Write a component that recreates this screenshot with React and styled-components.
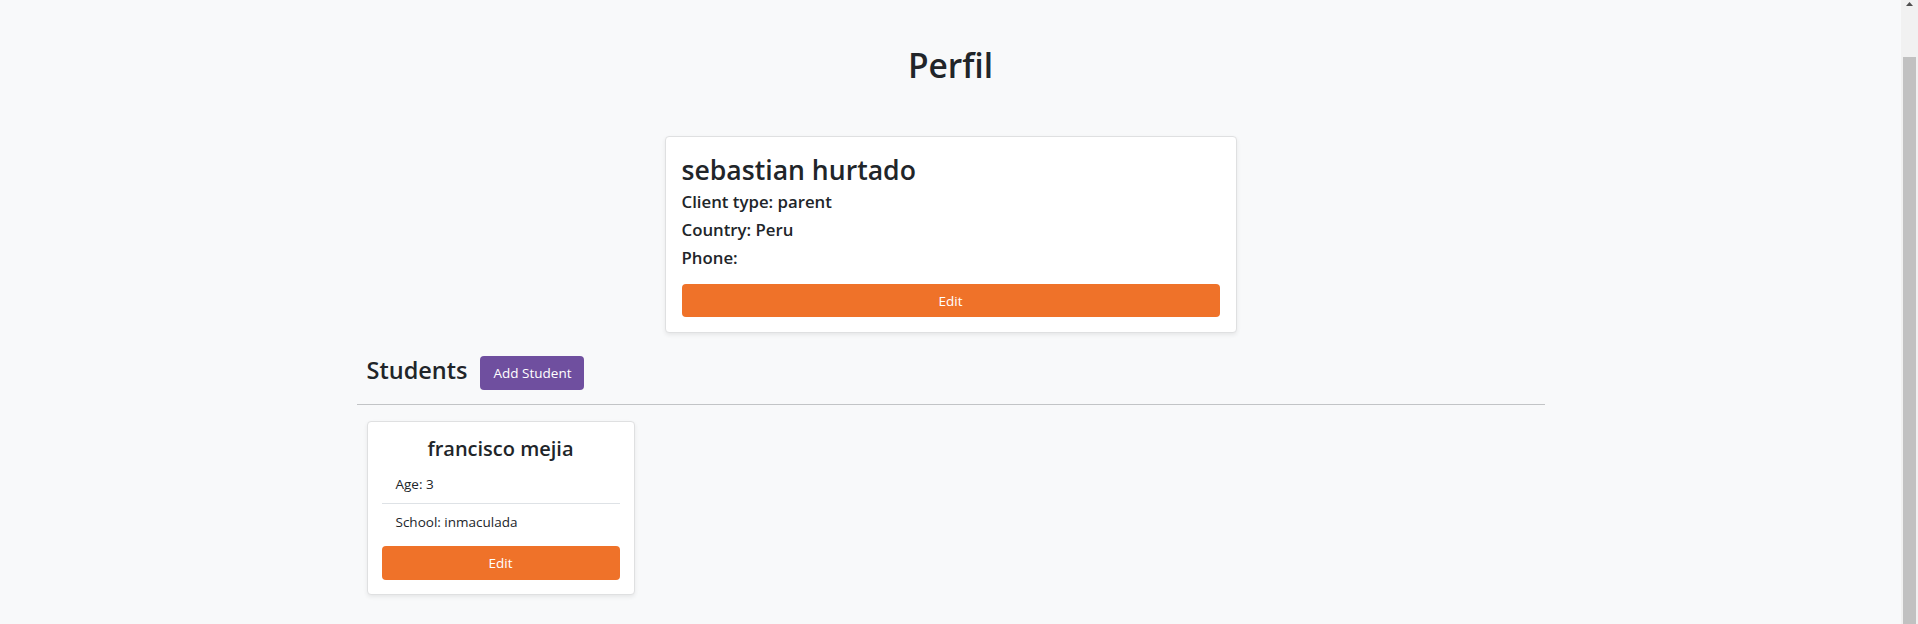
import React from 'react';
import styled, { createGlobalStyle } from 'styled-components';

const GlobalStyle = createGlobalStyle`
  html, body {
    margin: 0;
    padding: 0;
    background: #f8f9fa;
  }
  body {
    font-family: "Open Sans", "Noto Sans", Arial, sans-serif;
    color: #212529;
  }
  * {
    box-sizing: border-box;
  }
`;

const Screen = styled.div`
  display: flex;
  height: 100vh;
  overflow: hidden;
`;

const Main = styled.main`
  flex: 1;
  padding-top: 42px;
`;

const Container = styled.div`
  width: 1188px;
  margin: 0 auto;
`;

const Title = styled.h1`
  margin: 0 0 48px;
  font-size: 33.5px;
  line-height: 46px;
  font-weight: 600;
  text-align: center;
`;

const ProfileCard = styled.div`
  display: flex;
  flex-direction: column;
  width: 572px;
  margin: 0 auto;
  padding: 16px 16px 15px;
  background: #fff;
  border: 1px solid #dfe0e1;
  border-radius: 4px;
  box-shadow: 0 2px 4px rgba(0, 0, 0, 0.075);
`;

const Name = styled.h2`
  margin: 0 0 4px;
  font-size: 26.6px;
  line-height: 35px;
  font-weight: 600;
`;

const Info = styled.h6`
  margin: 0 0 8px;
  font-size: 16.8px;
  line-height: 20px;
  font-weight: 600;
`;

const Button = styled.button`
  display: block;
  width: ${p => (p.$block ? '100%' : 'auto')};
  height: ${p => p.$height || 34}px;
  margin-top: ${p => p.$top || 0}px;
  padding: 0 13px;
  border: none;
  border-radius: 4px;
  background: ${p => p.$color};
  color: #fff;
  font-family: inherit;
  font-size: 13.5px;
  cursor: pointer;
`;

const StudentsHeader = styled.div`
  display: flex;
  align-items: center;
  gap: 13px;
  margin-top: 23px;
  padding-left: 10px;
`;

const SectionTitle = styled.h3`
  margin: 0 0 6px;
  font-size: 23.5px;
  line-height: 28px;
  font-weight: 600;
`;

const Divider = styled.hr`
  margin: 14px 0 16px;
  border: none;
  border-top: 1px solid #c2c4c6;
`;

const StudentGrid = styled.div`
  display: flex;
  flex-wrap: wrap;
  gap: 16px;
  padding-left: 10px;
`;

const StudentCard = styled.div`
  display: flex;
  flex-direction: column;
  width: 268px;
  padding: 14px;
  background: #fff;
  border: 1px solid #dfe0e1;
  border-radius: 4px;
  box-shadow: 0 2px 4px rgba(0, 0, 0, 0.075);
`;

const StudentName = styled.h5`
  margin: 0 0 4px;
  font-size: 20px;
  line-height: 26px;
  font-weight: 600;
  text-align: center;
`;

const List = styled.ul`
  list-style: none;
  margin: 0;
  padding: 0;
`;

const Item = styled.li`
  padding: 8px 14px;
  font-size: 13.5px;
  line-height: 21px;
  & + & {
    border-top: 1px solid #dee2e6;
  }
`;

/* browser scrollbar, as seen in the screenshot */
const ScrollRail = styled.div`
  display: flex;
  flex-direction: column;
  flex: 0 0 17px;
  background: #f1f1f1;
`;

const ScrollArrow = styled.div`
  display: flex;
  justify-content: center;
  height: 17px;
  padding-top: 2px;
`;

const ScrollThumb = styled.div`
  flex: 1;
  margin: 40px 2px 0;
  background: #c1c1c1;
`;

const student = { name: 'francisco mejia', age: 3, school: 'inmaculada' };

export default function App() {
  return (
    <>
      <GlobalStyle />
      <Screen>
        <Main>
          <Container>
            <Title>Perfil</Title>
            <ProfileCard>
              <Name>sebastian hurtado</Name>
              <Info>Client type: parent</Info>
              <Info>Country: Peru</Info>
              <Info>Phone: </Info>
              <Button $block $color="#ef7229" $height={33} $top={8}>
                Edit
              </Button>
            </ProfileCard>

            <StudentsHeader>
              <SectionTitle>Students</SectionTitle>
              <Button $color="#6f4f9f">Add Student</Button>
            </StudentsHeader>
            <Divider />

            <StudentGrid>
              <StudentCard>
                <StudentName>{student.name}</StudentName>
                <List>
                  <Item>Age: {student.age}</Item>
                  <Item>School: {student.school}</Item>
                </List>
                <Button $block $color="#ef7229" $top={5}>
                  Edit
                </Button>
              </StudentCard>
            </StudentGrid>
          </Container>
        </Main>

        <ScrollRail>
          <ScrollArrow>
            <svg width="7" height="4" viewBox="0 0 7 4">
              <path d="M3.5 0 L7 4 L0 4 Z" fill="#505050" />
            </svg>
          </ScrollArrow>
          <ScrollThumb />
        </ScrollRail>
      </Screen>
    </>
  );
}
